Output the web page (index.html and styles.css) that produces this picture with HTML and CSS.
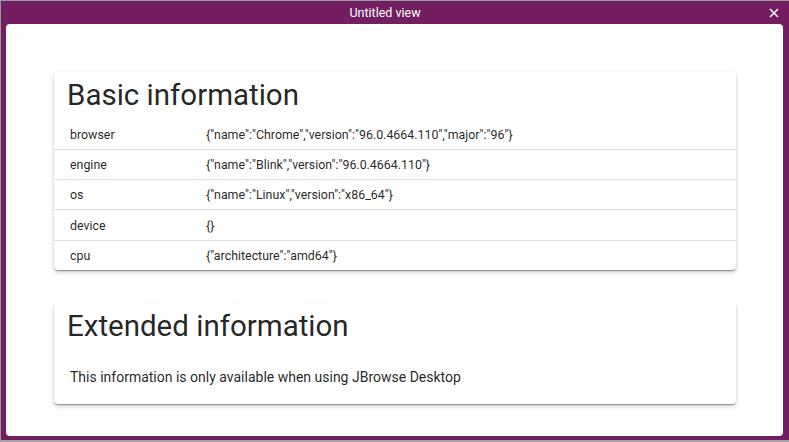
FILE: index.html
```html
<!DOCTYPE html>
<html>
<head>
<meta charset="utf-8">
<link rel="stylesheet" href="styles.css">
</head>
<body>
<div class="frame">
  <div class="titlebar">
    <span class="title">Untitled view</span>
    <button class="close" aria-label="close">
      <svg width="10" height="10" viewBox="0 0 10 10"><path d="M1 1 L9 9 M9 1 L1 9" stroke="#fff" stroke-width="1.5" fill="none"/></svg>
    </button>
  </div>
  <div class="content">
    <section class="card">
      <h2 class="card-title">Basic information</h2>
      <table class="info">
        <colgroup><col class="c-key"><col></colgroup>
        <tr><td>browser</td><td>{"name":"Chrome","version":"96.0.4664.110","major":"96"}</td></tr>
        <tr><td>engine</td><td>{"name":"Blink","version":"96.0.4664.110"}</td></tr>
        <tr><td>os</td><td>{"name":"Linux","version":"x86_64"}</td></tr>
        <tr><td>device</td><td>{}</td></tr>
        <tr><td>cpu</td><td>{"architecture":"amd64"}</td></tr>
      </table>
    </section>
    <section class="card">
      <h2 class="card-title">Extended information</h2>
      <p class="note">This information is only available when using JBrowse Desktop</p>
    </section>
  </div>
</div>
</body>
</html>
```
FILE: styles.css
```css
html, body {
  margin: 0;
  padding: 0;
  background: #fff;
}
body {
  font-family: Roboto, "Liberation Sans", sans-serif;
  color: rgba(0,0,0,0.87);
}
.frame {
  width: 789px;
  height: 442px;
  box-sizing: border-box;
  background: #721e61;
  border-top: 1px solid #9a9a9a;
  border-left: 1px solid #9a9a9a;
  border-bottom: 2px solid #a4a4a4;
  padding: 0 6px 4px 5px;
  display: flex;
  flex-direction: column;
}
.titlebar {
  height: 23px;
  flex: none;
  display: flex;
  align-items: center;
  justify-content: center;
  padding-right: 19px;
  position: relative;
  color: #fff;
}
.title {
  font-size: 12.5px;
}
.close {
  position: absolute;
  right: 4px;
  top: 7px;
  background: none;
  border: 0;
  padding: 0;
  width: 10px;
  height: 10px;
  display: flex;
}
.content {
  flex: 1;
  background: #fff;
  border-radius: 4px;
  padding: 48px 47px 0 48px;
  display: flex;
  flex-direction: column;
  gap: 33px;
}
.card {
  background: #fff;
  border-radius: 4px;
  box-shadow: 0 2px 1px -1px rgba(0,0,0,0.2), 0 1px 1px 0 rgba(0,0,0,0.14), 0 1px 3px 0 rgba(0,0,0,0.12), 0 3px 5px rgba(0,0,0,0.12);
  overflow: hidden;
}
.card-title {
  margin: 0;
  padding: 5px 13px 6.5px 13px;
  font-size: 29.5px;
  font-weight: 400;
  line-height: 36px;
  color: rgba(0,0,0,0.87);
}
.info {
  width: 100%;
  table-layout: fixed;
  border-collapse: collapse;
  font-size: 12.4px;
}
.c-key {
  width: 136px;
}
.info td {
  height: 29.3px;
  padding: 0 16px;
  border-bottom: 1px solid #e0e0e0;
  vertical-align: middle;
  white-space: nowrap;
}
.info tr:last-child td {
  border-bottom: 0;
}
.note {
  margin: 0;
  padding: 17px 16px 17px 16px;
  font-size: 14px;
  line-height: 20px;
}
```
